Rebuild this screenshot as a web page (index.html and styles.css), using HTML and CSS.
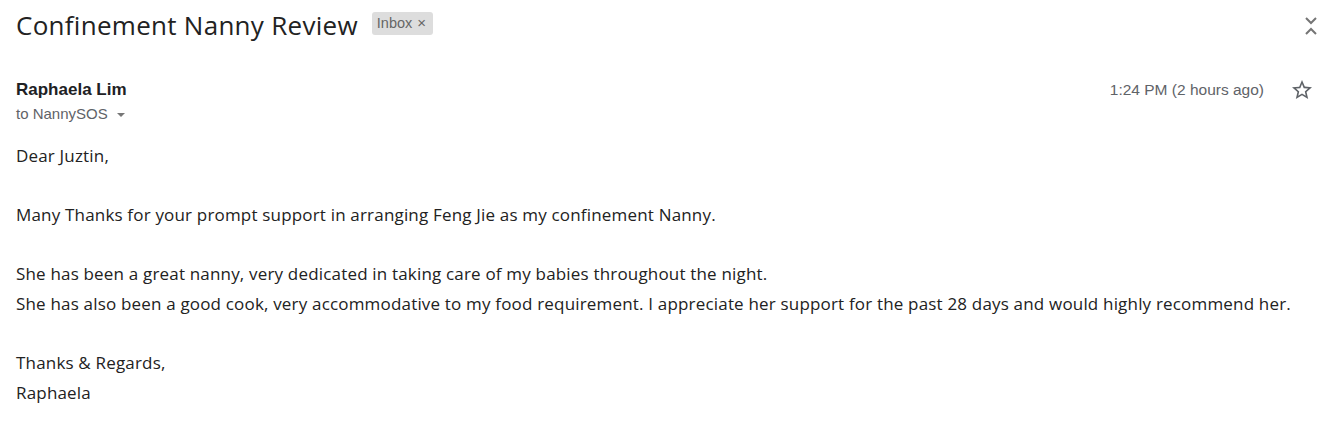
FILE: index.html
```html
<!DOCTYPE html>
<html>
<head>
<meta charset="utf-8">
<link rel="stylesheet" href="styles.css">
</head>
<body>
<div class="mail">
  <div class="subject-row">
    <h1 class="subject">Confinement Nanny Review</h1>
    <span class="label">Inbox <span class="label-x">×</span></span>
    <span class="spacer"></span>
    <svg class="expand" width="14" height="22" viewBox="0 0 14 22">
      <path d="M2 3 L7 8 L12 3" fill="none" stroke="#757575" stroke-width="2"/>
      <path d="M2 19 L7 14 L12 19" fill="none" stroke="#757575" stroke-width="2"/>
    </svg>
  </div>
  <div class="header-row">
    <div class="sender">
      <div class="name">Raphaela Lim</div>
      <div class="to">to NannySOS <span class="caret"></span></div>
    </div>
    <div class="meta">
      <span class="time">1:24 PM (2 hours ago)</span>
      <svg class="star" width="24" height="24" viewBox="0 0 24 24">
        <path d="M22 9.24l-7.19-.62L12 2 9.19 8.630 2 9.24l5.46 4.73L5.82 21 12 17.27 18.18 21l-1.63-7.03L22 9.24zM12 15.4l-3.76 2.27 1-4.28-3.32-2.88 4.38-.38L12 6.1l1.71 4.04 4.38.38-3.32 2.88 1 4.28L12 15.4z" fill="#5f6368"/>
      </svg>
    </div>
  </div>
  <div class="body">
    <p>Dear Juztin,</p>
    <p class="gap">Many Thanks for your prompt support in arranging Feng Jie as my confinement Nanny.</p>
    <p class="gap">She has been a great nanny, very dedicated in taking care of my babies throughout the night.</p>
    <p>She has also been a good cook, very accommodative to my food requirement. I appreciate her support for the past 28 days and would highly recommend her.</p>
    <p class="gap">Thanks &amp; Regards,</p>
    <p>Raphaela</p>
  </div>
</div>
</body>
</html>
```

FILE: styles.css
```css
html, body {
  margin: 0;
  padding: 0;
  background: #ffffff;
}
.mail {
  padding: 0 0 0 16px;
  width: 1327px;
  box-sizing: border-box;
}
.subject-row {
  display: flex;
  align-items: center;
  height: 50px;
  padding-right: 9px;
}
.subject {
  margin: 0;
  font-family: "Open Sans", sans-serif;
  font-weight: 400;
  font-size: 26px;
  color: #222222;
  letter-spacing: 0.28px;
}
.label {
  margin-left: 14px;
  margin-top: -3px;
  background: #dddddd;
  color: #666666;
  font-family: "Liberation Sans", Arial, sans-serif;
  font-size: 14.5px;
  padding: 3px 7px 4px 5px;
  border-radius: 3px;
  line-height: 16px;
}
.label-x {
  font-size: 15px;
  margin-left: 1px;
}
.spacer {
  flex: 1;
}
.expand {
  margin-top: 2px;
}
.header-row {
  display: flex;
  justify-content: space-between;
  align-items: flex-start;
  padding-right: 13px;
  margin-top: 28px;
}
.name {
  font-family: "Liberation Sans", Arial, sans-serif;
  font-weight: 700;
  font-size: 17px;
  color: #202124;
  line-height: 24px;
}
.to {
  font-family: "Liberation Sans", Arial, sans-serif;
  font-size: 15px;
  color: #5f6368;
  line-height: 24px;
  display: flex;
  align-items: center;
}
.caret {
  display: inline-block;
  width: 0;
  height: 0;
  border-left: 4.5px solid transparent;
  border-right: 4.5px solid transparent;
  border-top: 4.5px solid #777777;
  margin-left: 9px;
  margin-top: 1px;
}
.meta {
  display: flex;
  align-items: center;
  gap: 26px;
}
.time {
  font-family: "Liberation Sans", Arial, sans-serif;
  font-size: 15.5px;
  color: #5f6368;
  line-height: 24px;
}
.star {
  display: block;
}
.body {
  margin-top: 15px;
  font-family: "Open Sans", sans-serif;
  font-size: 17px;
  color: #222222;
  letter-spacing: 0.18px;
}
.body p {
  margin: 0;
  line-height: 29.6px;
}
.body p.gap {
  margin-top: 29.6px;
}
```
